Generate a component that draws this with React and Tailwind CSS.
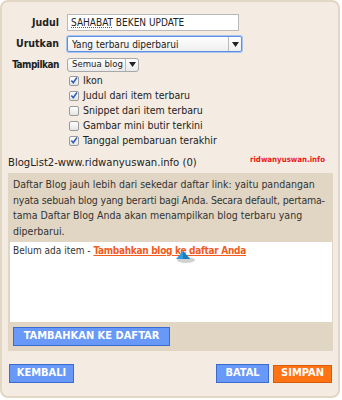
import React from "react";

const CHECKS = [
  { label: "Ikon", on: true },
  { label: "Judul dari item terbaru", on: true },
  { label: "Snippet dari item terbaru", on: false },
  { label: "Gambar mini butir terkini", on: false },
  { label: "Tanggal pembaruan terakhir", on: true },
];

function Check({ on }) {
  return (
    <span className="w-[10px] h-[10px] border border-[#9a9a9a] bg-gradient-to-b from-white to-[#e4e4e4] rounded-[2px] flex items-center justify-center">
      {on && (
        <svg width="9" height="9" viewBox="0 0 9 9">
          <path d="M1.5 4.5 L3.7 7 L7.8 1.2" fill="none" stroke="#2f5fb8" strokeWidth="1.8" />
        </svg>
      )}
    </span>
  );
}

function Caret() {
  return (
    <svg width="7" height="5" viewBox="0 0 7 5">
      <path d="M0 0 H7 L3.5 5 Z" fill="#222" />
    </svg>
  );
}

function BlueBtn({ children, className = "" }) {
  return (
    <button className={`h-[19px] bg-[#6898f8] border border-[#3a6bd0] text-white font-bold text-[11px] flex items-center justify-center ${className}`}>
      {children}
    </button>
  );
}

export default function App() {
  return (
    <div className="w-[342px] h-[400px] bg-white">
      <div className="relative w-[340px] h-[398px] border-2 border-[#e2d6c4] rounded-[8px] bg-[#f4ece3] pl-[6px] pr-[5px] pt-[12px] font-['DejaVu_Sans',sans-serif] [font-stretch:condensed] text-[#222]">
        {/* form rows */}
        <div className="grid grid-cols-[51px_1fr] gap-x-[8px] items-center text-[10.5px] font-bold">
          <span className="flex justify-end whitespace-nowrap">Judul</span>
          <div className="w-[172px] h-[17px] bg-white border border-[#b9b9b9] px-[3px] flex items-center text-[10px] font-normal">
            <span className="underline decoration-dotted decoration-[#e02020]">SAHABAT</span>
            <span>&nbsp;BEKEN UPDATE</span>
          </div>
          <span className="flex justify-end whitespace-nowrap mt-[5px]">Urutkan</span>
          <div className="mt-[5px] w-[175px] h-[16px] bg-gradient-to-b from-white to-[#eeeeee] border border-[#5d8fe0] rounded-[2px] shadow-[0_0_0_1px_#a8c6f3] flex items-center text-[10px] font-normal">
            <span className="flex-1 pl-[4px]">Yang terbaru diperbarui</span>
            <span className="w-[13px] h-full border-l border-[#bbb] flex items-center justify-center">
              <Caret />
            </span>
          </div>
          <span className="flex justify-end whitespace-nowrap mt-[5px] text-[10px] tracking-[-0.5px]">Tampilkan</span>
          <div className="mt-[5px] w-[72px] h-[14px] bg-gradient-to-b from-white to-[#e9e9e9] border border-[#a8a8a8] rounded-[3px] flex items-center text-[9.5px] font-normal">
            <span className="flex-1 pl-[4px]">Semua blog</span>
            <span className="w-[13px] h-full border-l border-[#bbb] flex items-center justify-center">
              <Caret />
            </span>
          </div>
        </div>

        {/* checkboxes */}
        <div className="mt-[1px] ml-[61px] flex flex-col text-[10.5px] font-medium">
          {CHECKS.map((c) => (
            <div key={c.label} className="h-[15px] flex items-center gap-[4px]">
              <Check on={c.on} />
              <span>{c.label}</span>
            </div>
          ))}
        </div>

        {/* watermark */}
        <span className="absolute left-[248px] top-[152px] text-[7.8px] font-bold text-[#ee1c1c] font-['DejaVu_Sans',sans-serif]">
          ridwanyuswan.info
        </span>

        <div className="mt-[8px] h-[14px] flex items-center text-[11.2px] font-medium">
          BlogList2-www.ridwanyuswan.info (0)
        </div>

        {/* list box */}
        <div className="mt-[3px] bg-[#e1d6c4] pb-[5px]">
          <p className="pl-[5px] pr-[2px] pt-[4px] text-[10.5px] leading-[15.5px] text-[#333] whitespace-nowrap">
            Daftar Blog jauh lebih dari sekedar daftar link: yaitu pandangan<br />
            <span className="tracking-[-0.18px]">nyata sebuah blog yang berarti bagi Anda. Secara default, pertama-</span><br />
            tama Daftar Blog Anda akan menampilkan blog terbaru yang<br />
            diperbarui.
          </p>
          <div className="relative mt-[3px] ml-[2px] mr-[1px] h-[80px] bg-white px-[3px] pt-[2px] text-[10px] leading-[14px] text-[#333]">
            Belum ada item -{" "}
            <a className="text-[#f25a1e] font-bold underline tracking-[-0.3px]">Tambahkan blog ke daftar Anda</a>
            <svg className="absolute left-[164px] top-[8px]" width="22" height="14" viewBox="0 0 22 14">
              <ellipse cx="12" cy="10" rx="9" ry="3" fill="#000" opacity="0.18" />
              <path d="M2 9 L9 1 L16 9 Z" fill="#2f9be0" />
              <path d="M9 1 L16 9 L9 9 Z" fill="#1a7cc4" />
            </svg>
          </div>
          <BlueBtn className="mt-[5px] ml-[5px] w-[157px]">TAMBAHKAN KE DAFTAR</BlueBtn>
        </div>

        {/* bottom bar */}
        <div className="mt-[13px] flex items-center">
          <BlueBtn className="ml-[1px] w-[65px] h-[18px]">KEMBALI</BlueBtn>
          <div className="flex-1" />
          <BlueBtn className="w-[53px] h-[18px]">BATAL</BlueBtn>
          <button className="ml-[4px] mr-[1px] w-[59px] h-[18px] bg-[#ff7315] border border-[#d95c08] text-white font-bold text-[11px] flex items-center justify-center">
            SIMPAN
          </button>
        </div>
      </div>
    </div>
  );
}
